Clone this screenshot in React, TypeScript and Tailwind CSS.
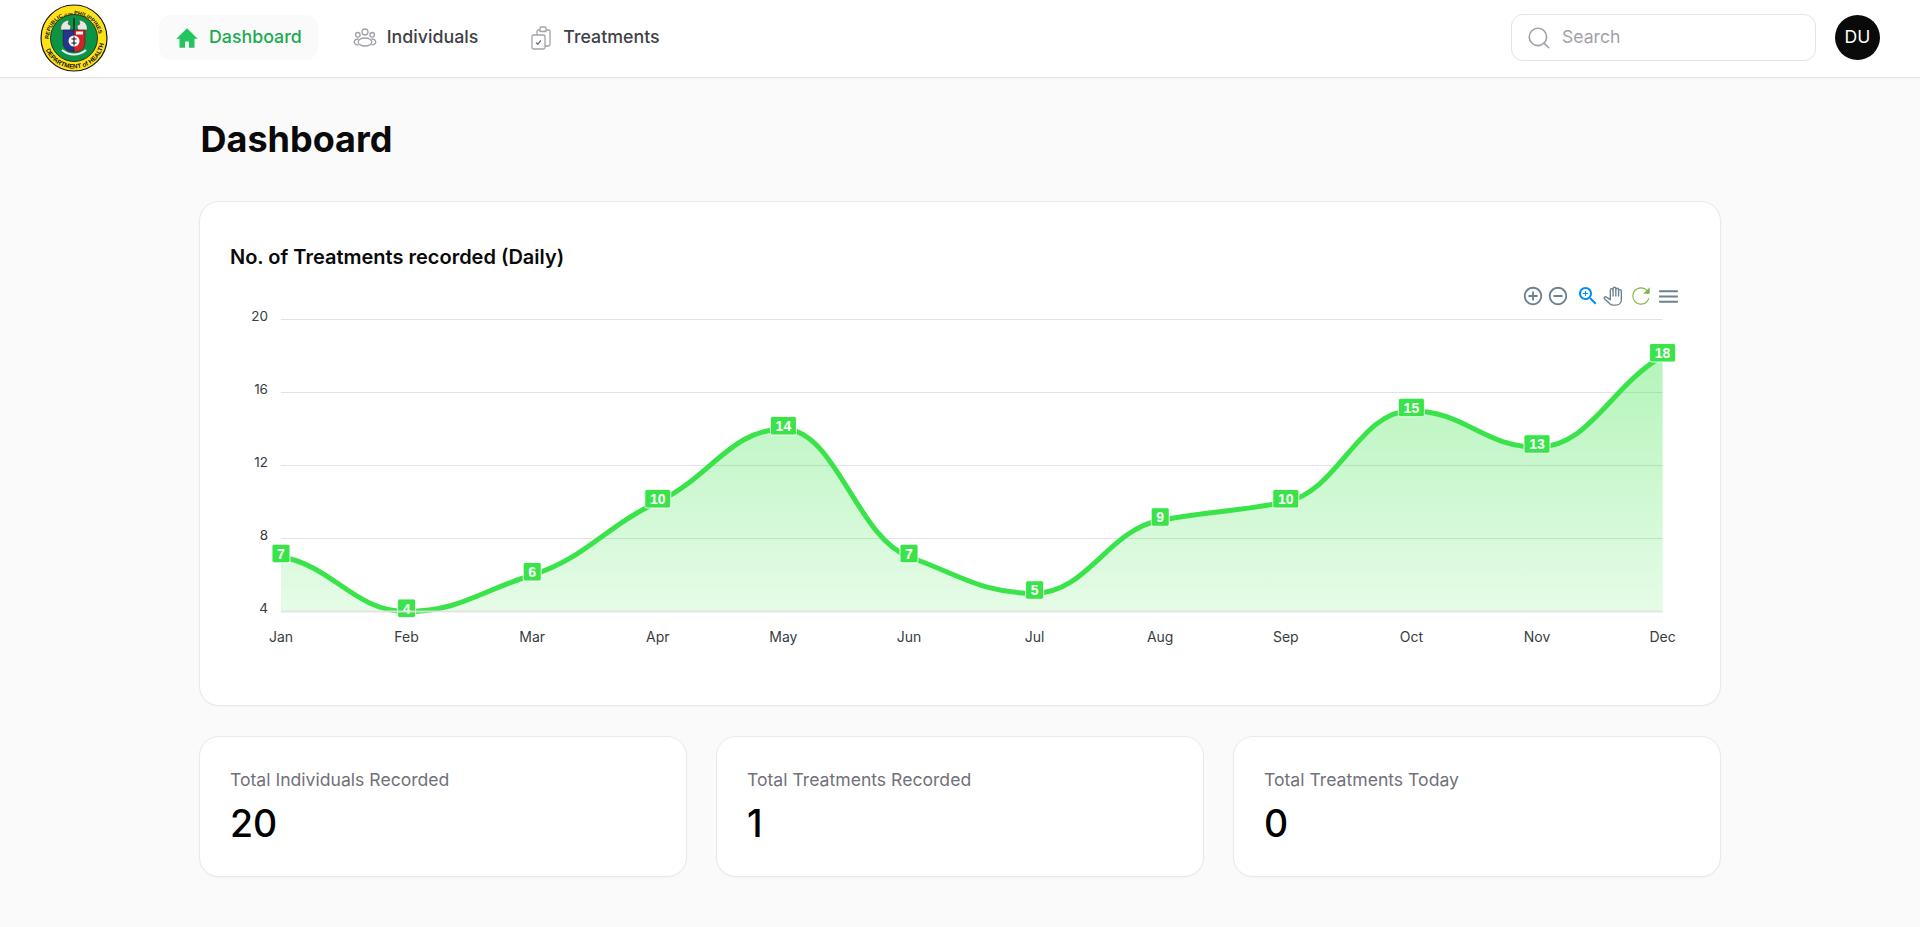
const months = ["Jan", "Feb", "Mar", "Apr", "May", "Jun", "Jul", "Aug", "Sep", "Oct", "Nov", "Dec"];
const values = [7, 4, 6, 10, 14, 7, 5, 9, 10, 15, 13, 18];

// chart geometry, in svg coordinates
const plotLeft = 81;
const stepX = 125.6;
const topY = 49.5;
const bottomY = 341.5;
const px = (i: number) => plotLeft + i * stepX;
const py = (v: number) => bottomY - ((v - 4) / 16) * (bottomY - topY);

// monotone cubic through the points, same look as apexcharts "smooth"
function smoothPath() {
  const pts = values.map((v, i) => [px(i), py(v)]);
  const n = pts.length;
  const d: number[] = [];
  const m: number[] = [];
  for (let i = 0; i < n - 1; i++) d.push((pts[i + 1][1] - pts[i][1]) / stepX);
  m.push(d[0] / 2);
  for (let i = 1; i < n - 1; i++) m.push(d[i - 1] * d[i] <= 0 ? 0 : (2 * d[i - 1] * d[i]) / (d[i - 1] + d[i]));
  m.push(d[n - 2]);
  const hx = stepX / 2.4;
  const hy = stepX / 3;
  let path = `M${pts[0][0]} ${pts[0][1]}`;
  for (let i = 0; i < n - 1; i++) {
    path += `C${pts[i][0] + hx} ${pts[i][1] + m[i] * hy} ${pts[i + 1][0] - hx} ${pts[i + 1][1] - m[i + 1] * hy} ${pts[i + 1][0]} ${pts[i + 1][1]}`;
  }
  return path;
}

const linePath = smoothPath();
const areaPath = `${linePath}L${px(11)} ${bottomY}L${px(0)} ${bottomY}Z`;

function Logo() {
  return (
    <svg viewBox="0 0 68 68" className="h-[68px] w-[68px]">
      <defs>
        <path id="ring-top" d="M8.500 36a25.500 25.500 0 0 1 51 0" fill="none" />
        <path id="ring-bottom" d="M3.500 34a30.500 30.500 0 0 0 61 0" fill="none" />
      </defs>
      <circle cx="34" cy="34" r="33" fill="#ffe11a" stroke="#151515" strokeWidth="1.2" />
      <circle cx="34" cy="34" r="23.500" fill="#0b9444" stroke="#151515" strokeWidth="0.8" />
      <text fontSize="5.400" fontFamily="Liberation Sans, sans-serif" fontWeight="700" fill="#111">
        <textPath href="#ring-top" startOffset="1">
          REPUBLIC <tspan fontSize="3">of the</tspan> PHILIPPINES
        </textPath>
      </text>
      <text fontSize="6.300" fontFamily="Liberation Sans, sans-serif" fontWeight="700" fill="#111">
        <textPath href="#ring-bottom" startOffset="12">DEPARTMENT of HEALTH</textPath>
      </text>
      {/* wings and snakes above the shield */}
      <path d="M21 26c-1-5 2-9 8-10l-1 4 3 2-1 4z" fill="#e4e9e4" stroke="#444" strokeWidth="0.5" />
      <path d="M47 26c1-5-2-9-8-10l1 4-3 2 1 4z" fill="#e4e9e4" stroke="#444" strokeWidth="0.5" />
      <path d="M34 14v12" stroke="#222" strokeWidth="1.400" />
      {/* shield */}
      <path d="M23 26h11v22c-6 0-11-3-11-10z" fill="#26358f" stroke="#111" strokeWidth="0.4" />
      <path d="M34 26h11v12c0 7-5 10-11 10z" fill="#d2232a" stroke="#111" strokeWidth="0.4" />
      <rect x="36" y="27.500" width="7" height="3" fill="#f1f1f1" />
      <circle cx="34" cy="37" r="5.500" fill="#fff" />
      <path d="M34 32.500v9M31.500 35h5M31.500 39h5" stroke="#111" strokeWidth="1.100" />
      <path d="M22 46c7 6 17 6 24 0" stroke="#f1f1f1" strokeWidth="2.200" fill="none" />
    </svg>
  );
}

function HomeIcon() {
  return (
    <svg viewBox="0 0 24 24" className="h-6 w-6" fill="#22c55e">
      <path d="M12 2.200 1.300 12.800h3.200v9h5.600v-6.300h3.800v6.300h5.600v-9h3.200z" />
    </svg>
  );
}

function PeopleIcon() {
  return (
    <svg viewBox="0 0 24 24" className="h-6 w-6" fill="none" stroke="#a1a1aa" strokeWidth="1.300">
      <circle cx="12" cy="6" r="3" />
      <circle cx="4.800" cy="8.800" r="2.300" />
      <circle cx="19.200" cy="8.800" r="2.300" />
      <ellipse cx="12" cy="16" rx="6.800" ry="4" />
      <path d="M5.500 13c-2.500.1-4.200 1.400-4.200 3 0 1.500 1.500 2.700 4.200 3" />
      <path d="M18.500 13c2.500.1 4.200 1.400 4.200 3 0 1.500-1.500 2.700-4.200 3" />
    </svg>
  );
}

function ClipboardIcon() {
  return (
    <svg viewBox="0 0 24 24" className="h-6 w-6" fill="none" stroke="#a1a1aa" strokeWidth="1.300" strokeLinejoin="round">
      <rect x="3" y="9" width="13" height="14" rx="1.500" />
      <path d="M8 9V5.500A1.500 1.500 0 0 1 9.500 4H11M17 4h2.500A1.500 1.500 0 0 1 21 5.500V18.500A1.500 1.500 0 0 1 19.500 20H16" />
      <path d="M11 5.500V2.500A1.500 1.500 0 0 1 12.500 1h3A1.500 1.500 0 0 1 17 2.500V5.500z" />
      <path d="m7 16.500 1.800 1.800 3-3.800" stroke="#71717a" />
    </svg>
  );
}

function NavItem({ label, icon, active }: { label: string; icon: React.ReactNode; active?: boolean }) {
  return (
    <div
      className={
        active
          ? "flex h-[45px] items-center gap-[10px] rounded-xl bg-[#fafafa] px-4 font-medium text-[#1cab50]"
          : "flex h-[45px] items-center gap-[10px] rounded-xl px-4 font-medium text-[#3f3f46]"
      }
    >
      {icon}
      <span className="text-[17.8px]">{label}</span>
    </div>
  );
}

function StatCard({ label, value }: { label: string; value: number }) {
  return (
    <div className="rounded-[20px] border border-[#e9e9eb] bg-white px-[30px] pb-[29px] pt-[30px] shadow-[0_1px_2px_rgba(0,0,0,0.03)]">
      <p className="text-[17.6px] leading-[26px] text-[#71717a]">{label}</p>
      <p className="mt-2 text-[37.5px] font-medium leading-[46px] text-black">{value}</p>
    </div>
  );
}

function Toolbar() {
  return (
    <div className="flex items-center">
      <svg viewBox="0 0 24 24" className="h-[22px] w-[22px]" fill="#6e8192">
        <path d="M13 7h-2v4H7v2h4v4h2v-4h4v-2h-4V7zm-1-5C6.480 2 2 6.480 2 12s4.480 10 10 10 10-4.480 10-10S17.520 2 12 2zm0 18c-4.410 0-8-3.590-8-8s3.590-8 8-8 8 3.590 8 8-3.590 8-8 8z" />
      </svg>
      <svg viewBox="0 0 24 24" className="ml-[3px] h-[22px] w-[22px]" fill="#6e8192">
        <path d="M7 11v2h10v-2H7zm5-9C6.480 2 2 6.480 2 12s4.480 10 10 10 10-4.480 10-10S17.520 2 12 2zm0 18c-4.410 0-8-3.590-8-8s3.590-8 8-8 8 3.590 8 8-3.590 8-8 8z" />
      </svg>
      <svg viewBox="0 0 24 24" className="ml-[7px] h-6 w-6" fill="#008ffb">
        <path d="M15.500 14h-.79l-.28-.27C15.410 12.590 16 11.110 16 9.500 16 5.910 13.090 3 9.500 3S3 5.910 3 9.500 5.910 16 9.500 16c1.610 0 3.090-.59 4.230-1.570l.27.28v.79l5 4.990L20.490 19l-4.990-5zm-6 0C7.010 14 5 11.990 5 9.500S7.010 5 9.500 5 14 7.010 14 9.500 11.990 14 9.500 14z" />
        <path d="M12 10h-2v2H9v-2H7V9h2V7h1v2h2v1z" />
      </svg>
      {/* pan hand, four fingers held together */}
      <svg viewBox="0 0 24 24" className="ml-[3px] h-[22px] w-[22px]" fill="none" stroke="#6e8192" strokeWidth="1.500" strokeLinejoin="round" strokeLinecap="round">
        <path d="M8 15V5.500a1.500 1.500 0 0 1 3 0V4a1.500 1.500 0 0 1 3 0v1a1.500 1.500 0 0 1 3 0v1.500a1.500 1.500 0 0 1 3 0V16c0 3.500-2.500 6-6 6h-3c-2 0-3.500-1-4.500-2.500L1.500 15c-.8-1.200.9-2.800 2.200-1.800L8 16" />
        <path d="M11 5.500V12M14 5V12M17 6.500V12" />
      </svg>
      <svg viewBox="0 0 24 24" className="ml-[3px] h-[26px] w-[26px]" fill="#7cb342">
        <path d="M17.650 6.350C16.200 4.900 14.210 4 12 4c-4.420 0-7.990 3.580-7.990 8s3.570 8 7.990 8c3.730 0 6.840-2.550 7.730-6h-1.100c-.82 2.900-3.500 5-6.630 5-3.860 0-7-3.140-7-7s3.140-7 7-7c1.930 0 3.660.79 4.920 2.080L14 10h6V4l-2.350 2.350z" />
      </svg>
      <svg viewBox="0 0 24 24" className="ml-[2px] h-[25px] w-[25px]" fill="#6e8192">
        <path d="M3 18h18v-2H3v2zm0-5h18v-2H3v2zm0-7v2h18V6H3z" />
      </svg>
    </div>
  );
}

function Chart() {
  return (
    <svg viewBox="0 0 1500 400" className="block h-[400px] w-[1500px]">
      <defs>
        <linearGradient id="area-fill" x1="0" y1="0" x2="0" y2="1">
          <stop offset="0" stopColor="#3ae34a" stopOpacity="0.38" />
          <stop offset="1" stopColor="#3ae34a" stopOpacity="0.13" />
        </linearGradient>
      </defs>
      {[20, 16, 12, 8, 4].map((v) => (
        <g key={v}>
          <line x1={plotLeft} x2={px(11)} y1={py(v)} y2={py(v)} stroke="#e3e3e3" strokeWidth="1" />
          <text x="68" y={py(v) + 1.500} textAnchor="end" fontSize="13.500" fill="#373d3f" fontFamily="Inter, sans-serif">
            {v}
          </text>
        </g>
      ))}
      <path d={areaPath} fill="url(#area-fill)" />
      <path d={linePath} fill="none" stroke="#3ae34a" strokeWidth="5" />
      {months.map((m, i) => (
        <text key={m} x={px(i)} y="372" textAnchor="middle" fontSize="14" fill="#373d3f" fontFamily="Inter, sans-serif">
          {m}
        </text>
      ))}
      {values.map((v, i) => {
        const w = v >= 10 ? 26 : 18;
        const y = py(v);
        return (
          <g key={i}>
            <rect x={px(i) - w / 2} y={y - 12.500} width={w} height="18.500" rx="2" fill="#3ae34a" stroke="#fff" strokeOpacity="0.85" strokeWidth="1" />
            <text x={px(i)} y={y + 2} textAnchor="middle" fontSize="14" fontWeight="700" fill="#fff" fontFamily="Liberation Sans, Arial, sans-serif">
              {v}
            </text>
          </g>
        );
      })}
      {/* axis line sits on top of the labels */}
      <line x1={plotLeft} x2={px(11)} y1={bottomY} y2={bottomY} stroke="#e3e3e3" strokeOpacity="0.85" strokeWidth="2" />
    </svg>
  );
}

export default function App() {
  return (
    <div className="min-h-[927px] bg-[#fafafa] font-['Inter',sans-serif]">
      <header className="flex h-[78px] items-center justify-between border-b border-[#e4e4e7] bg-white pb-[2px] pl-10 pr-10 shadow-[0_1px_2px_rgba(0,0,0,0.03)]">
        <div className="flex items-center">
          <Logo />
          <nav className="ml-[51px] flex items-center gap-[19px]">
            <NavItem label="Dashboard" active icon={<HomeIcon />} />
            <NavItem label="Individuals" icon={<PeopleIcon />} />
            <NavItem label="Treatments" icon={<ClipboardIcon />} />
          </nav>
        </div>
        <div className="flex items-center gap-[19px]">
          <div className="flex h-[47px] w-[305px] items-center gap-[10px] rounded-xl border border-[#e4e4e7] bg-white pl-[14px]">
            <svg viewBox="0 0 24 24" className="h-[26px] w-[26px]" fill="none" stroke="#a1a1aa" strokeWidth="1.500" strokeLinecap="round">
              <circle cx="11" cy="11" r="8" />
              <path d="m21 21-4.300-4.300" />
            </svg>
            <span className="text-[17.6px] text-[#a1a1aa]">Search</span>
          </div>
          <div className="flex h-[45px] w-[45px] items-center justify-center rounded-full bg-[#0a0a0a] text-[17.6px] text-white">DU</div>
        </div>
      </header>
      <main className="mx-auto w-[1522px] pt-[38px]">
        <h1 className="ml-[1.5px] text-4xl font-bold leading-[46px] text-[#0a0a0a]">Dashboard</h1>
        <section className="mt-[39px] h-[505px] overflow-hidden rounded-[20px] border border-[#e9e9eb] bg-white pt-[42px] shadow-[0_1px_2px_rgba(0,0,0,0.03)]">
          <h2 className="pl-[30px] text-[20px] font-semibold leading-[26px] text-[#0a0a0a]">No. of Treatments recorded (Daily)</h2>
          <div className="relative">
            <div className="absolute left-[1322px] top-[13px]">
              <Toolbar />
            </div>
            <Chart />
          </div>
        </section>
        <div className="mt-[30px] grid grid-cols-3 gap-[29px]">
          <StatCard label="Total Individuals Recorded" value={20} />
          <StatCard label="Total Treatments Recorded" value={1} />
          <StatCard label="Total Treatments Today" value={0} />
        </div>
      </main>
    </div>
  );
}
